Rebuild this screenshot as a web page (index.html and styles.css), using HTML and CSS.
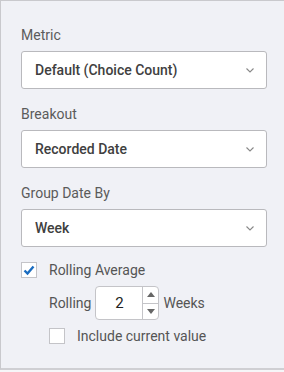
FILE: index.html
```html
<!DOCTYPE html>
<html lang="en">
<head>
  <meta charset="UTF-8" />
  <title>Chart Settings</title>
  <link rel="stylesheet" href="styles.css">
</head>
<body>
  <div class="panel">
    <div class="field">
      <label class="field-label">Metric</label>
      <div class="select">
        <span>Default (Choice Count)</span>
        <svg class="chevron" width="8" height="5" viewBox="0 0 8 5"><path d="M0.5 0.5l3.5 3.5 3.5-3.5" fill="none" stroke="#888" stroke-width="1.1"/></svg>
      </div>
    </div>

    <div class="field">
      <label class="field-label">Breakout</label>
      <div class="select">
        <span>Recorded Date</span>
        <svg class="chevron" width="8" height="5" viewBox="0 0 8 5"><path d="M0.5 0.5l3.5 3.5 3.5-3.5" fill="none" stroke="#888" stroke-width="1.1"/></svg>
      </div>
    </div>

    <div class="field">
      <label class="field-label">Group Date By</label>
      <div class="select">
        <span>Week</span>
        <svg class="chevron" width="8" height="5" viewBox="0 0 8 5"><path d="M0.5 0.5l3.5 3.5 3.5-3.5" fill="none" stroke="#888" stroke-width="1.1"/></svg>
      </div>
    </div>

    <div class="check-row">
      <span class="box">
        <svg width="14" height="14" viewBox="0 0 14 14"><path d="M2.5 7.5l3 3 6-7" fill="none" stroke="#1a6cc0" stroke-width="2.4"/></svg>
      </span>
      <span>Rolling Average</span>
    </div>

    <div class="rolling">
      <span>Rolling</span>
      <div class="spinner">
        <span class="spin-value">2</span>
        <div class="spin-buttons">
          <span class="spin-btn"><svg width="8" height="5" viewBox="0 0 8 5"><path d="M0 5L4 0 8 5z" fill="#666"/></svg></span>
          <span class="spin-btn"><svg width="8" height="5" viewBox="0 0 8 5"><path d="M0 0L4 5 8 0z" fill="#666"/></svg></span>
        </div>
      </div>
      <span>Weeks</span>
    </div>

    <div class="check-row sub">
      <span class="box"></span>
      <span>Include current value</span>
    </div>
  </div>
</body>
</html>
```

FILE: styles.css
```css
body {
  margin: 0;
  background: #f6f6f8;
  font-family: Roboto, "Liberation Sans", sans-serif;
  font-size: 14px;
  color: #555;
}
.panel {
  height: 370px;
  box-sizing: border-box;
  background: #f0f1f6;
  border-top: 1px solid #c9c9cd;
  border-left: 1px solid #c9c9cd;
  border-bottom: 2px solid #cfcfd3;
  padding: 25px 17px 0 20px;
}
.field {
  margin-bottom: 16px;
}
.field-label {
  display: block;
  height: 18px;
  line-height: 18px;
  margin-bottom: 7px;
  color: #5b5b5b;
}
.select {
  height: 38px;
  box-sizing: border-box;
  border: 1px solid #b9b9bd;
  border-radius: 3px;
  background: #fff;
  display: flex;
  align-items: center;
  justify-content: space-between;
  padding: 0 12px 0 13px;
  font-weight: 500;
  color: #404040;
}
.chevron {
  display: block;
}
.check-row {
  display: flex;
  align-items: center;
  gap: 12px;
  margin-top: -1px;
  height: 16px;
}
.box {
  width: 16px;
  height: 16px;
  box-sizing: border-box;
  border: 1px solid #c4c4c8;
  background: #fff;
  display: flex;
  align-items: center;
  justify-content: center;
}
.rolling {
  display: flex;
  align-items: center;
  gap: 4px;
  margin: 8px 0 8px 28px;
}
.spinner {
  width: 64px;
  height: 34px;
  box-sizing: border-box;
  border: 1px solid #c4c4c8;
  border-radius: 4px;
  background: #fff;
  display: flex;
}
.spin-value {
  flex: 1;
  display: flex;
  align-items: center;
  justify-content: center;
  color: #222;
  font-size: 15px;
}
.spin-buttons {
  width: 15px;
  border-left: 1px solid #c4c4c8;
  display: flex;
  flex-direction: column;
}
.spin-btn {
  flex: 1;
  display: flex;
  align-items: center;
  justify-content: center;
}
.spin-btn + .spin-btn {
  border-top: 1px solid #c4c4c8;
}
.check-row.sub {
  margin-left: 28px;
  margin-top: 0;
}
```
